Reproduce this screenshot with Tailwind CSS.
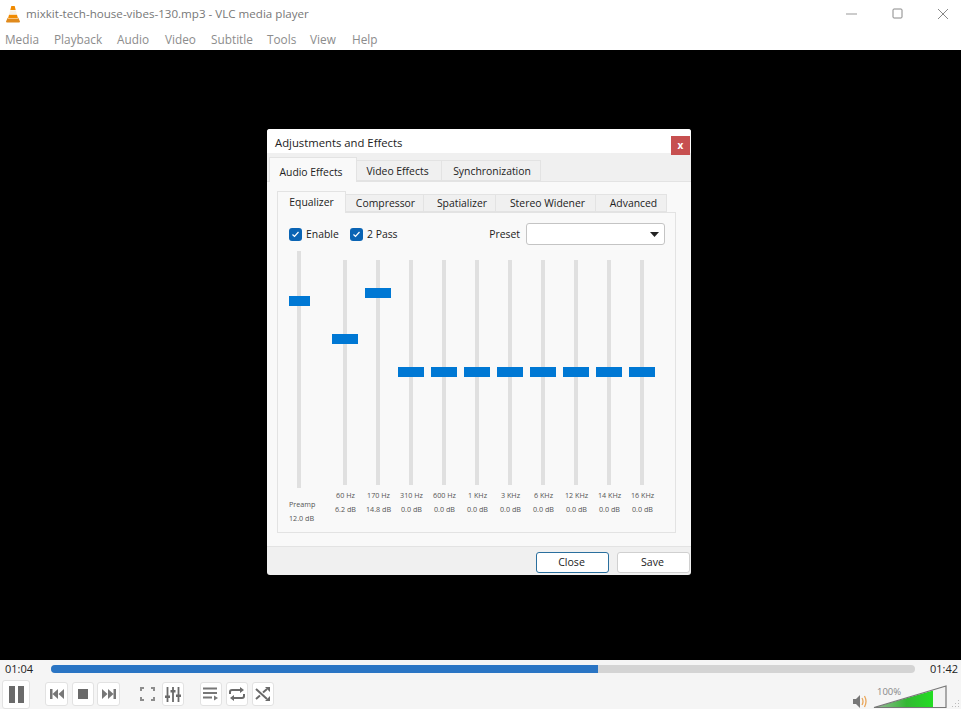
<!DOCTYPE html>
<html lang="en">
<head>
    <meta charset="UTF-8">
    <title>VLC media player</title>
    <script src="https://cdn.jsdelivr.net/npm/@tailwindcss/browser@4"></script>
</head>
<body class="bg-black">
<div class="relative w-[961px] h-[709px] overflow-hidden flex flex-col font-['Open_Sans',sans-serif]">

    <!-- title bar -->
    <div class="h-[27px] bg-white flex items-center pl-[5px] shrink-0">
        <svg class="w-[16px] h-[18px]" viewBox="0 0 16 18">
            <path d="M6.3 1h3.4l1 4H5.3z" fill="#f08a00"/>
            <path d="M5.1 5.6h5.8l.9 3.6H4.200z" fill="#f5f0e6"/>
            <path d="M4 9.800h8l1 3.800H3z" fill="#f08a00"/>
            <path d="M2.800 12.500 1 16.500q0 1 1 1h12q1 0 1-1l-1.800-4l-.4 1.400H3.200z" fill="#e08a1c"/>
        </svg>
        <span class="ml-[5px] mt-[1px] text-[11.6px] text-[#777]">mixkit-tech-house-vibes-130.mp3 - VLC media player</span>
        <div class="ml-auto flex items-center">
            <svg class="w-[12px] h-[12px] mr-[34px]" viewBox="0 0 12 12"><path d="M0 6h11" stroke="#999" stroke-width="1"/></svg>
            <svg class="w-[12px] h-[12px] mr-[33px]" viewBox="0 0 12 12"><rect x="1" y="1" width="9" height="9" rx="1" fill="none" stroke="#888" stroke-width="1"/></svg>
            <svg class="w-[12px] h-[12px] mr-[12px]" viewBox="0 0 12 12"><path d="M1 1l10 10M11 1L1 11" stroke="#888" stroke-width="1"/></svg>
        </div>
    </div>

    <!-- menu -->
    <div class="h-[23px] bg-white flex items-start pl-[5px] pt-[4px] text-[11.8px] text-[#8c8c8c] shrink-0">
        <span class="w-[49px]">Media</span>
        <span class="w-[63px]">Playback</span>
        <span class="w-[48px]">Audio</span>
        <span class="w-[46px]">Video</span>
        <span class="w-[56px]">Subtitle</span>
        <span class="w-[43px]">Tools</span>
        <span class="w-[42px]">View</span>
        <span>Help</span>
    </div>

    <!-- video area -->
    <div class="flex-1 bg-black"></div>

    <!-- controls -->
    <div class="h-[49px] bg-[#f5f5f5] shrink-0 flex flex-col">
        <div class="h-[20px] flex items-center text-[11px] text-[#222]">
            <span class="w-[51px] pl-[5px]">01:04</span>
            <div class="w-[864px] h-[8px] -mt-[2px] rounded-full bg-[#d4d4d4] overflow-hidden">
                <div class="w-[547px] h-full bg-[#2a75c4]"></div>
            </div>
            <span class="ml-[15px]">01:42</span>
        </div>
        <div class="flex-1 flex items-start relative pt-[1px]">
            <div class="ml-[2px] w-[28px] h-[29px] bg-white border border-[#e2e2e2] rounded-[3px] flex items-start pt-[5px] justify-center gap-[3px]">
                <div class="w-[6px] h-[17px] bg-[#6a6a6a]"></div>
                <div class="w-[6px] h-[17px] bg-[#6a6a6a]"></div>
            </div>

            <div class="ml-[15px] mt-[2px] w-[23px] h-[24px] bg-white border border-[#e2e2e2] rounded-[3px] flex items-center justify-center">
                <svg class="w-[14px] h-[10px]" viewBox="0 0 14 10"><path d="M0 0h2.500v10H0zM8 0v10L2.500 5zM14 0v10L8.500 5z" fill="#777"/></svg>
            </div>
            <div class="ml-[4px] mt-[2px] w-[22px] h-[24px] bg-white border border-[#e2e2e2] rounded-[3px] flex items-center justify-center">
                <div class="w-[10px] h-[10px] bg-[#6a6a6a]"></div>
            </div>
            <div class="ml-[3px] mt-[2px] w-[23px] h-[24px] bg-white border border-[#e2e2e2] rounded-[3px] flex items-center justify-center">
                <svg class="w-[14px] h-[10px]" viewBox="0 0 14 10"><path d="M0 0v10L5.500 5zM6 0v10L11.500 5zM11.500 0H14v10h-2.500z" fill="#777"/></svg>
            </div>

            <div class="ml-[16px] mt-[2px] w-[22px] h-[24px] flex items-center justify-center">
                <svg class="w-[15px] h-[14px]" viewBox="0 0 15 14"><path d="M1 4V1h3M11 1h3v3M14 10v3h-3M4 13H1v-3" fill="none" stroke="#8c8c8c" stroke-width="2"/></svg>
            </div>
            <div class="ml-[4px] mt-[2px] w-[22px] h-[24px] bg-white border border-[#e2e2e2] rounded-[3px] flex items-center justify-center">
                <svg class="w-[16px] h-[15px]" viewBox="0 0 16 15"><path d="M2.500 0v15M8 0v15M13.500 0v15" stroke="#6a6a6a" stroke-width="1.800"/><path d="M0 8.500h5v2.500H0zM5.500 3h5v2.500h-5zM11 7.500h5V10h-5z" fill="#6a6a6a"/></svg>
            </div>

            <div class="ml-[16px] mt-[2px] w-[22px] h-[24px] bg-white border border-[#e2e2e2] rounded-[3px] flex items-center justify-center">
                <svg class="w-[16px] h-[14px]" viewBox="0 0 16 14"><path d="M0 1.500h14M0 6h14M0 10.500h9" stroke="#777" stroke-width="1.800"/><path d="M11 8.500l4 2.500-4 2.500z" fill="#777"/></svg>
            </div>
            <div class="ml-[4px] mt-[2px] w-[22px] h-[24px] bg-white border border-[#e2e2e2] rounded-[3px] flex items-center justify-center">
                <svg class="w-[16px] h-[14px]" viewBox="0 0 16 14"><path d="M1 7V5q0-2 2-2h9M15 7v2q0 2-2 2H4" fill="none" stroke="#6a6a6a" stroke-width="2"/><path d="M11 0l4 3-4 3zM5 8l-4 3 4 3z" fill="#6a6a6a"/></svg>
            </div>
            <div class="ml-[4px] mt-[2px] w-[22px] h-[24px] bg-white border border-[#e2e2e2] rounded-[3px] flex items-center justify-center">
                <svg class="w-[16px] h-[14px]" viewBox="0 0 16 14"><path d="M1 2l11 10M1 12l4-3.500M8 5.500L12 2" fill="none" stroke="#6a6a6a" stroke-width="2"/><path d="M10 0h5v5zM10 14h5V9z" fill="#6a6a6a"/></svg>
            </div>

            <!-- volume -->
            <svg class="absolute left-[852px] top-[16px] w-[16px] h-[13px]" viewBox="0 0 16 13">
                <path d="M1 4h3l4-4v13L4 9H1z" fill="#777"/>
                <path d="M10 3q2 3.500 0 7M12.500 1q3 5.500 0 11" fill="none" stroke="#e9a65a" stroke-width="1.300"/>
            </svg>
            <svg class="absolute left-[873px] top-[6px] w-[75px] h-[23px]" viewBox="0 0 75 23">
                <defs>
                    <linearGradient id="vol" x1="0" x2="1" y1="0" y2="0">
                        <stop offset="0" stop-color="#9fb89f"/>
                        <stop offset="0.55" stop-color="#33b833"/>
                        <stop offset="1" stop-color="#22dd22"/>
                    </linearGradient>
                </defs>
                <path d="M1 22.500 60 5.500v17z" fill="url(#vol)"/>
                <path d="M60 5.500 73 1.500v21H60z" fill="#f2f2f2"/>
                <path d="M1 22.500 73 1v21.500z" fill="none" stroke="#777" stroke-width="1.200"/>
            </svg>
            <span class="absolute left-[877px] top-[6px] text-[9.5px] text-[#888]">100%</span>
            <svg class="absolute left-[952px] top-[20px] w-[8px] h-[8px]" viewBox="0 0 8 8"><path d="M6 1h1v1H6zM6 4h1v1H6zM3 4h1v1H3zM6 7h1v1H6zM3 7h1v1H3zM0 7h1v1H0z" fill="#bbb"/></svg>
        </div>
    </div>

    <!-- dialog, floats over the video -->
    <div class="absolute left-[267px] top-[129px] w-[424px] h-[446px] bg-[#f0f0f0] rounded-[3px] flex flex-col text-[10.4px] text-[#222]">
        <div class="h-[24px] bg-white rounded-t-[3px] flex items-start pl-[8px] pr-[1px] shrink-0">
            <span class="mt-[6px] text-[11.3px] text-[#222]">Adjustments and Effects</span>
            <div class="relative z-20 ml-auto mt-[7px] w-[19px] h-[19px] bg-[#c75050] flex items-center justify-center text-white text-[10px] font-bold">x</div>
        </div>

        <!-- outer tabs -->
        <div class="h-[29px] flex items-end pl-[2px] shrink-0 relative z-10">
            <div class="w-[88px] h-[25px] pt-[5px] pr-[4px] bg-[#f9f9f9] border border-b-0 border-[#e3e3e3] flex items-center justify-center">Audio Effects</div>
            <div class="w-[85px] h-[21px] pt-[3px] pr-[3px] mb-[1px] bg-[#f0f0f0] border border-l-0 border-[#e3e3e3] flex items-center justify-center">Video Effects</div>
            <div class="w-[99px] h-[21px] pt-[3px] pl-[2px] mb-[1px] bg-[#f0f0f0] border border-l-0 border-[#e3e3e3] flex items-center justify-center">Synchronization</div>
        </div>

        <!-- outer panel -->
        <div class="h-[366px] bg-[#f9f9f9] border-y border-[#e3e3e3] -mt-[1px] px-[10px] pt-[11px] shrink-0">
            <div class="h-[20px] flex items-end relative z-10">
                <div class="w-[69px] h-[22px] pt-[1px] bg-[#f9f9f9] border border-b-0 border-[#e3e3e3] flex items-center justify-center">Equalizer</div>
                <div class="w-[78px] h-[18px] pt-[1px] pl-[2px] mb-[1px] bg-[#f0f0f0] border border-l-0 border-[#e3e3e3] flex items-center justify-center">Compressor</div>
                <div class="w-[72px] h-[18px] pt-[1px] pl-[5px] mb-[1px] bg-[#f0f0f0] border border-l-0 border-[#e3e3e3] flex items-center justify-center">Spatializer</div>
                <div class="w-[100px] h-[18px] pt-[1px] pl-[4px] mb-[1px] bg-[#f0f0f0] border border-l-0 border-[#e3e3e3] flex items-center justify-center">Stereo Widener</div>
                <div class="w-[71px] h-[18px] pt-[1px] pl-[5px] mb-[1px] bg-[#f0f0f0] border border-l-0 border-[#e3e3e3] flex items-center justify-center">Advanced</div>
            </div>
            <div class="w-[399px] h-[321px] -mt-[1px] border border-[#e3e3e3] bg-[#f9f9f9] pl-[11px] pt-[10px]">
                <!-- enable row -->
                <div class="h-[22px] flex items-center pr-[10px]">
                    <div class="w-[13px] h-[13px] rounded-[3px] bg-[#0a64b4] flex items-center justify-center">
                        <svg class="w-[9px] h-[9px]" viewBox="0 0 9 9"><path d="M1.500 4.500l2 2 4-4.500" fill="none" stroke="#fff" stroke-width="1.200"/></svg>
                    </div>
                    <span class="ml-[4px] mt-[1px] w-[44px]">Enable</span>
                    <div class="w-[13px] h-[13px] rounded-[3px] bg-[#0a64b4] flex items-center justify-center">
                        <svg class="w-[9px] h-[9px]" viewBox="0 0 9 9"><path d="M1.500 4.500l2 2 4-4.500" fill="none" stroke="#fff" stroke-width="1.200"/></svg>
                    </div>
                    <span class="ml-[4px] mt-[1px]">2 Pass</span>
                    <span class="ml-auto mt-[2px]">Preset</span>
                    <div class="ml-[6px] w-[139px] h-[22px] bg-white border border-[#c4c4c4] rounded-[3px] flex items-center justify-end pr-[5px]">
                        <svg class="w-[9px] h-[5px]" viewBox="0 0 9 5"><path d="M0 0h9L4.500 5z" fill="#222"/></svg>
                    </div>
                </div>

                <!-- sliders -->
                <div class="flex text-[7.2px] text-[#555] leading-none whitespace-nowrap">
                    <div class="relative w-[21px] h-[275px] mt-[6px]">
                        <div class="absolute left-[8px] top-0 w-[4px] h-[237px] bg-[#e0e0e0]"></div>
                        <div class="absolute left-0 top-[45px] w-[21px] h-[10px] bg-[#0078d4]"></div>
                        <span class="absolute left-0 top-[250px]">Preamp</span>
                        <span class="absolute left-0 top-[264px]">12.0 dB</span>
                    </div>
                    <div class="ml-[19px] flex">
                        <div class="relative w-[33px] h-[270px] mt-[15px]">
                            <div class="absolute left-[14px] top-0 w-[4px] h-[225px] bg-[#e0e0e0]"></div>
                            <div class="absolute left-[3px] top-[74px] w-[26px] h-[10px] bg-[#0078d4]"></div>
                            <div class="absolute left-0 w-full top-[232px] text-center">60 Hz</div>
                            <div class="absolute left-0 w-full top-[246px] text-center">6.2 dB</div>
                        </div>
                        <div class="relative w-[33px] h-[270px] mt-[15px]">
                            <div class="absolute left-[14px] top-0 w-[4px] h-[225px] bg-[#e0e0e0]"></div>
                            <div class="absolute left-[3px] top-[28px] w-[26px] h-[10px] bg-[#0078d4]"></div>
                            <div class="absolute left-0 w-full top-[232px] text-center">170 Hz</div>
                            <div class="absolute left-0 w-full top-[246px] text-center">14.8 dB</div>
                        </div>
                        <div class="relative w-[33px] h-[270px] mt-[15px]">
                            <div class="absolute left-[14px] top-0 w-[4px] h-[225px] bg-[#e0e0e0]"></div>
                            <div class="absolute left-[3px] top-[107px] w-[26px] h-[10px] bg-[#0078d4]"></div>
                            <div class="absolute left-0 w-full top-[232px] text-center">310 Hz</div>
                            <div class="absolute left-0 w-full top-[246px] text-center">0.0 dB</div>
                        </div>
                        <div class="relative w-[33px] h-[270px] mt-[15px]">
                            <div class="absolute left-[14px] top-0 w-[4px] h-[225px] bg-[#e0e0e0]"></div>
                            <div class="absolute left-[3px] top-[107px] w-[26px] h-[10px] bg-[#0078d4]"></div>
                            <div class="absolute left-0 w-full top-[232px] text-center">600 Hz</div>
                            <div class="absolute left-0 w-full top-[246px] text-center">0.0 dB</div>
                        </div>
                        <div class="relative w-[33px] h-[270px] mt-[15px]">
                            <div class="absolute left-[14px] top-0 w-[4px] h-[225px] bg-[#e0e0e0]"></div>
                            <div class="absolute left-[3px] top-[107px] w-[26px] h-[10px] bg-[#0078d4]"></div>
                            <div class="absolute left-0 w-full top-[232px] text-center">1 KHz</div>
                            <div class="absolute left-0 w-full top-[246px] text-center">0.0 dB</div>
                        </div>
                        <div class="relative w-[33px] h-[270px] mt-[15px]">
                            <div class="absolute left-[14px] top-0 w-[4px] h-[225px] bg-[#e0e0e0]"></div>
                            <div class="absolute left-[3px] top-[107px] w-[26px] h-[10px] bg-[#0078d4]"></div>
                            <div class="absolute left-0 w-full top-[232px] text-center">3 KHz</div>
                            <div class="absolute left-0 w-full top-[246px] text-center">0.0 dB</div>
                        </div>
                        <div class="relative w-[33px] h-[270px] mt-[15px]">
                            <div class="absolute left-[14px] top-0 w-[4px] h-[225px] bg-[#e0e0e0]"></div>
                            <div class="absolute left-[3px] top-[107px] w-[26px] h-[10px] bg-[#0078d4]"></div>
                            <div class="absolute left-0 w-full top-[232px] text-center">6 KHz</div>
                            <div class="absolute left-0 w-full top-[246px] text-center">0.0 dB</div>
                        </div>
                        <div class="relative w-[33px] h-[270px] mt-[15px]">
                            <div class="absolute left-[14px] top-0 w-[4px] h-[225px] bg-[#e0e0e0]"></div>
                            <div class="absolute left-[3px] top-[107px] w-[26px] h-[10px] bg-[#0078d4]"></div>
                            <div class="absolute left-0 w-full top-[232px] text-center">12 KHz</div>
                            <div class="absolute left-0 w-full top-[246px] text-center">0.0 dB</div>
                        </div>
                        <div class="relative w-[33px] h-[270px] mt-[15px]">
                            <div class="absolute left-[14px] top-0 w-[4px] h-[225px] bg-[#e0e0e0]"></div>
                            <div class="absolute left-[3px] top-[107px] w-[26px] h-[10px] bg-[#0078d4]"></div>
                            <div class="absolute left-0 w-full top-[232px] text-center">14 KHz</div>
                            <div class="absolute left-0 w-full top-[246px] text-center">0.0 dB</div>
                        </div>
                        <div class="relative w-[33px] h-[270px] mt-[15px]">
                            <div class="absolute left-[14px] top-0 w-[4px] h-[225px] bg-[#e0e0e0]"></div>
                            <div class="absolute left-[3px] top-[107px] w-[26px] h-[10px] bg-[#0078d4]"></div>
                            <div class="absolute left-0 w-full top-[232px] text-center">16 KHz</div>
                            <div class="absolute left-0 w-full top-[246px] text-center">0.0 dB</div>
                        </div>
                    </div>
                </div>
            </div>
        </div>

        <!-- footer -->
        <div class="flex-1 flex items-start justify-end pt-[5px] pr-[1px] text-[10.6px]">
            <div class="w-[73px] h-[21px] pr-[2px] bg-white border border-[#2a6f9e] rounded-[3px] flex items-center justify-center">Close</div>
            <div class="ml-[8px] w-[73px] h-[21px] pr-[2px] bg-white border border-[#d0d0d0] rounded-[3px] flex items-center justify-center">Save</div>
        </div>
    </div>
</div>
</body>
</html>
